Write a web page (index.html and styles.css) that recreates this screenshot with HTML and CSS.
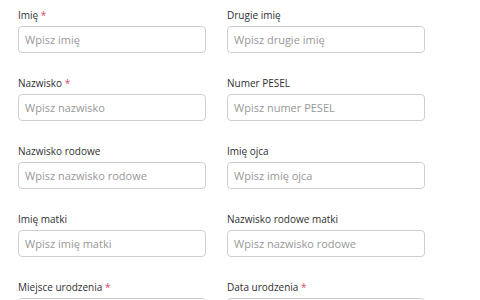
FILE: index.html
```html
<!DOCTYPE html>
<html lang="pl">
<head>
<meta charset="utf-8">
<link rel="stylesheet" href="styles.css">
</head>
<body>
<form class="form">
  <div class="field"><label class="label">Imię <span class="req">*</span></label><input class="input" placeholder="Wpisz imię"></div>
  <div class="field"><label class="label">Drugie imię</label><input class="input" placeholder="Wpisz drugie imię"></div>
  <div class="field"><label class="label">Nazwisko <span class="req">*</span></label><input class="input" placeholder="Wpisz nazwisko"></div>
  <div class="field"><label class="label">Numer PESEL</label><input class="input" placeholder="Wpisz numer PESEL"></div>
  <div class="field"><label class="label">Nazwisko rodowe</label><input class="input" placeholder="Wpisz nazwisko rodowe"></div>
  <div class="field"><label class="label">Imię ojca</label><input class="input" placeholder="Wpisz imię ojca"></div>
  <div class="field"><label class="label">Imię matki</label><input class="input" placeholder="Wpisz imię matki"></div>
  <div class="field"><label class="label">Nazwisko rodowe matki</label><input class="input" placeholder="Wpisz nazwisko rodowe"></div>
  <div class="field"><label class="label">Miejsce urodzenia <span class="req">*</span></label><input class="input" placeholder="Wpisz miejsce urodzenia"></div>
  <div class="field"><label class="label">Data urodzenia <span class="req">*</span></label><input class="input" placeholder="Wpisz datę urodzenia"></div>
</form>
</body>
</html>
```
FILE: styles.css
```css
html, body {
  margin: 0;
  padding: 0;
  background: #fff;
  height: 300px;
  overflow: hidden;
}
body {
  font-family: "Open Sans", "Liberation Sans", sans-serif;
  color: #333;
}
.form {
  display: grid;
  grid-template-columns: 188px 198px;
  column-gap: 21px;
  row-gap: 24px;
  padding: 9px 0 0 18px;
}
.field {
  display: flex;
  flex-direction: column;
  gap: 4px;
}
.label {
  font-size: 10px;
  line-height: 13px;
  color: #2f2f2f;
  white-space: nowrap;
}
.req {
  color: #e2476f;
}
.input {
  box-sizing: border-box;
  height: 27px;
  width: 100%;
  border: 1px solid #cfcfcf;
  border-radius: 4px;
  padding: 0 6px;
  font-family: "Open Sans", "Liberation Sans", sans-serif;
  font-size: 11px;
  color: #333;
  background: #fff;
  outline: none;
}
.input::placeholder {
  color: #989898;
  opacity: 1;
}
```
